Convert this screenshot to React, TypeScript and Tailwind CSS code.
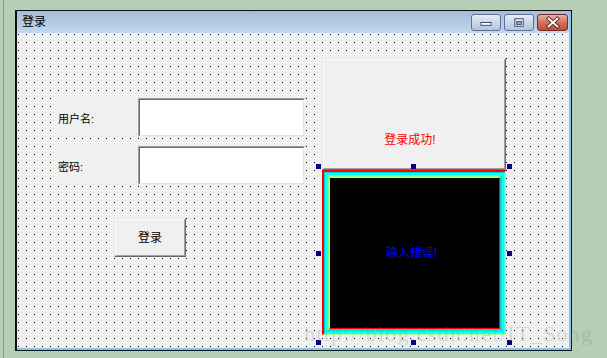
import React from 'react';

const FONT = { fontFamily: '"Liberation Sans", "Noto Sans CJK SC", sans-serif' };

function TitleButton({ kind }: { kind: 'min' | 'max' | 'close' }) {
  const isClose = kind === 'close';
  return (
    <div
      className={`relative h-[17px] rounded-[3px] border ${
        isClose
          ? 'w-[31px] border-[#6e2c24] bg-gradient-to-b from-[#eab0a2] via-[#d2705c] to-[#c24c38]'
          : 'w-[30px] border-[#5d7194] bg-gradient-to-b from-[#e6eef7] via-[#c9d7e9] to-[#b3c6df]'
      }`}
    >
      <svg className="absolute inset-0" width="100%" height="100%" viewBox="0 0 30 15">
        {kind === 'min' && <rect x="9.5" y="7.5" width="11" height="3" fill="#fff" stroke="#33445e" />}
        {kind === 'max' && (
          <>
            <rect x="10.5" y="3.5" width="9" height="8" fill="#eef3f9" stroke="#33445e" />
            <rect x="12.5" y="6.5" width="5" height="3" fill="#9fb3cd" stroke="#33445e" />
          </>
        )}
        {isClose && (
          <>
            <path d="M11 3.5 L20 11.5 M20 3.5 L11 11.5" stroke="#5a2a24" strokeWidth="4" strokeLinecap="square" />
            <path d="M11 3.5 L20 11.5 M20 3.5 L11 11.5" stroke="#fff" strokeWidth="2" strokeLinecap="square" />
          </>
        )}
      </svg>
    </div>
  );
}

function SunkenInput() {
  return (
    <div className="mt-[4px] w-[167px] h-[39px] border border-t-[#a0a0a0] border-l-[#a0a0a0] border-b-[#f0f0f0] border-r-[#f0f0f0]">
      <div className="w-full h-full bg-white border border-t-[#6a6a6a] border-l-[#6a6a6a] border-b-[#e3e3e3] border-r-[#e3e3e3]" />
    </div>
  );
}

function FieldRow({ label }: { label: string }) {
  return (
    <div className="flex items-start">
      <div className="w-[80px] h-[42px] bg-[#f0f0f0] flex items-center pl-[6px] pt-[8px] text-[11px] leading-[13px] text-black">
        {label}
      </div>
      <div className="ml-[6px]">
        <SunkenInput />
      </div>
    </div>
  );
}

function Handle({ className }: { className: string }) {
  return <div className={`absolute w-[5px] h-[5px] bg-[#000080] ${className}`} />;
}

export default function App() {
  return (
    <div className="relative w-[607px] h-[358px] overflow-hidden bg-[#b6cdb6] flex" style={FONT}>
      <div className="ml-[3px] w-px h-full bg-[#8e8e8e]" />

      {/* window */}
      <div className="ml-[11px] mt-[10px] w-[557px] h-[341px] border border-l-2 border-[#111]">
        <div className="w-full h-full flex flex-col border-r-2 border-b-2 border-[#86c6ec]">
          {/* title bar */}
          <div className="h-[22px] flex items-start justify-between pl-[5px] pr-px bg-gradient-to-b from-[#a5bcd9] to-[#c4d7ee]">
            <span className="mt-[4px] text-[12px] leading-[14px] text-black">登录</span>
            <div className="flex gap-[3px] pt-[3px]">
              <TitleButton kind="min" />
              <TitleButton kind="max" />
              <TitleButton kind="close" />
            </div>
          </div>

          {/* client area */}
          <div className="flex-1 flex items-start pl-[35px] pt-[25px] bg-[#f0f0f0] bg-[conic-gradient(from_270deg_at_1px_1px,#000_90deg,transparent_0)] bg-[length:8px_8px] bg-[position:1px_1px]">
            <div className="mt-[36px] w-[253px] flex flex-col">
              <FieldRow label="用户名:" />
              <div className="mt-[5px]">
                <FieldRow label="密码:" />
              </div>
              <div className="mt-[33px] ml-[62px] w-[72px] h-[39px] border border-t-[#e3e3e3] border-l-[#e3e3e3] border-b-[#696969] border-r-[#696969]">
                <div className="w-full h-full bg-[#f0f0f0] flex items-center justify-center text-[12px] border border-t-white border-l-white border-b-[#a0a0a0] border-r-[#a0a0a0]">
                  登录
                </div>
              </div>
            </div>

            <div className="ml-[17px] w-[184px] flex flex-col">
              <div className="h-[112px] border border-t-[#e3e3e3] border-l-[#e3e3e3] border-b-[#696969] border-r-[#696969]">
                <div className="w-full h-full bg-[#f0f0f0] flex items-end justify-center pb-[21px] pr-[8px] text-[12px] leading-[14px] text-[#ff0000] border border-t-white border-l-white border-b-[#a0a0a0] border-r-[#a0a0a0]">
                  登录成功!
                </div>
              </div>

              <div className="relative h-[165px]">
                <div className="w-full h-full border-t-2 border-l-2 border-t-[#ff0000] border-l-[#ff0000] border-r border-b border-r-[#a8ff8a] border-b-[#a8ff8a]">
                  <div className="w-full h-full border border-t-[#00d4d4] border-l-[#00d4d4] border-r-[#40ffe0] border-b-[#40ffe0]">
                    <div className="w-full h-full border-2 border-[#00ffff]">
                      <div className="w-full h-full border border-t-[#40ffd0] border-l-[#40ffd0] border-r-[#00dede] border-b-[#00dede]">
                        <div className="w-full h-full border border-t-[#90ff70] border-l-[#90ff70] border-r-[#30c4c4] border-b-[#30c4c4]">
                          <div className="w-full h-full border border-t-[#c8ff40] border-l-[#c8ff40] border-r-[#ff0000] border-b-[#ff0000]">
                            <div className="w-full h-full bg-black flex items-center justify-center pr-[6px] text-[12px] leading-[14px] text-[#0000ff]">
                              输入错误!
                            </div>
                          </div>
                        </div>
                      </div>
                    </div>
                  </div>
                </div>
                <Handle className="left-[-6px] top-[-6px]" />
                <Handle className="left-[89px] top-[-6px]" />
                <Handle className="left-[185px] top-[-6px]" />
                <Handle className="left-[-6px] top-[81px]" />
                <Handle className="left-[185px] top-[81px]" />
                <Handle className="left-[-6px] top-[170px]" />
                <Handle className="left-[89px] top-[170px]" />
                <Handle className="left-[185px] top-[170px]" />
              </div>
            </div>
          </div>
        </div>
      </div>

      {/* watermark */}
      <div
        className="absolute left-[304px] top-[322px] text-[22px] leading-[24px] tracking-[1.3px] text-[#808080]/25 whitespace-nowrap pointer-events-none"
        style={{ fontFamily: '"Liberation Serif", serif' }}
      >
        http://blog.csdn.net/IT_Song
      </div>
    </div>
  );
}
